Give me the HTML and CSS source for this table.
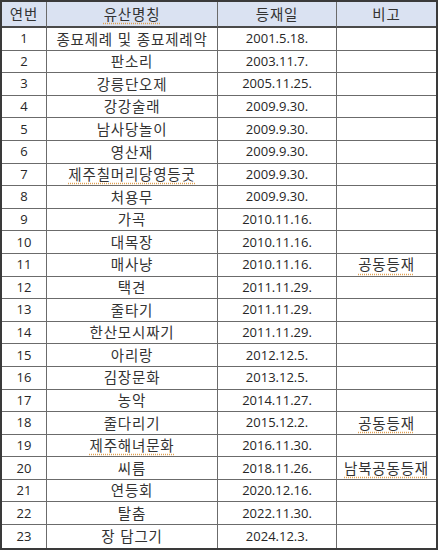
FILE: index.html
```html
<!DOCTYPE html>
<html lang="ko">
<head>
<meta charset="utf-8">
<link rel="stylesheet" href="styles.css">
</head>
<body>
<div class="table">
  <div class="cell head ko">연번</div><div class="cell head ko"><span class="sq">유산명칭</span></div><div class="cell head ko">등재일</div><div class="cell head ko last">비고</div>
  <div class="cell">1</div><div class="cell ko">종묘제례 및 종묘제례악</div><div class="cell">2001.5.18.</div><div class="cell last"></div>
  <div class="cell">2</div><div class="cell ko">판소리</div><div class="cell">2003.11.7.</div><div class="cell last"></div>
  <div class="cell">3</div><div class="cell ko">강릉단오제</div><div class="cell">2005.11.25.</div><div class="cell last"></div>
  <div class="cell">4</div><div class="cell ko">강강술래</div><div class="cell">2009.9.30.</div><div class="cell last"></div>
  <div class="cell">5</div><div class="cell ko">남사당놀이</div><div class="cell">2009.9.30.</div><div class="cell last"></div>
  <div class="cell">6</div><div class="cell ko">영산재</div><div class="cell">2009.9.30.</div><div class="cell last"></div>
  <div class="cell">7</div><div class="cell ko"><span class="sq">제주칠머리당영등굿</span></div><div class="cell">2009.9.30.</div><div class="cell last"></div>
  <div class="cell">8</div><div class="cell ko">처용무</div><div class="cell">2009.9.30.</div><div class="cell last"></div>
  <div class="cell">9</div><div class="cell ko">가곡</div><div class="cell">2010.11.16.</div><div class="cell last"></div>
  <div class="cell">10</div><div class="cell ko">대목장</div><div class="cell">2010.11.16.</div><div class="cell last"></div>
  <div class="cell">11</div><div class="cell ko">매사냥</div><div class="cell">2010.11.16.</div><div class="cell ko last"><span class="sq">공동등재</span></div>
  <div class="cell">12</div><div class="cell ko">택견</div><div class="cell">2011.11.29.</div><div class="cell last"></div>
  <div class="cell">13</div><div class="cell ko">줄타기</div><div class="cell">2011.11.29.</div><div class="cell last"></div>
  <div class="cell">14</div><div class="cell ko">한산모시짜기</div><div class="cell">2011.11.29.</div><div class="cell last"></div>
  <div class="cell">15</div><div class="cell ko">아리랑</div><div class="cell">2012.12.5.</div><div class="cell last"></div>
  <div class="cell">16</div><div class="cell ko">김장문화</div><div class="cell">2013.12.5.</div><div class="cell last"></div>
  <div class="cell">17</div><div class="cell ko">농악</div><div class="cell">2014.11.27.</div><div class="cell last"></div>
  <div class="cell">18</div><div class="cell ko">줄다리기</div><div class="cell">2015.12.2.</div><div class="cell ko last"><span class="sq">공동등재</span></div>
  <div class="cell">19</div><div class="cell ko"><span class="sq">제주해녀문화</span></div><div class="cell">2016.11.30.</div><div class="cell last"></div>
  <div class="cell">20</div><div class="cell ko">씨름</div><div class="cell">2018.11.26.</div><div class="cell ko last"><span class="sq">남북공동등재</span></div>
  <div class="cell">21</div><div class="cell ko">연등회</div><div class="cell">2020.12.16.</div><div class="cell last"></div>
  <div class="cell">22</div><div class="cell ko">탈춤</div><div class="cell">2022.11.30.</div><div class="cell last"></div>
  <div class="cell end">23</div><div class="cell ko end">장 담그기</div><div class="cell end">2024.12.3.</div><div class="cell last end"></div>
</div>
</body>
</html>
```
FILE: styles.css
```css
html, body {
  margin: 0;
  padding: 0;
  background: #ffffff;
}
.table {
  width: 438px;
  box-sizing: border-box;
  border: 2px solid #3a3a3a;
  display: grid;
  grid-template-columns: 45px 171px 119px 1fr;
  grid-template-rows: 26px;
  grid-auto-rows: 22.6px;
  font-family: "Open Sans", "Noto Sans CJK KR", sans-serif;
  font-size: 13px;
  color: #262626;
}
.cell {
  box-sizing: border-box;
  border-right: 1px solid #6b6b6b;
  border-bottom: 1px solid #6b6b6b;
  display: flex;
  align-items: center;
  justify-content: center;
  white-space: nowrap;
  line-height: 1;
}
.ko {
  font-family: "Noto Sans CJK KR", sans-serif;
  font-size: 14.5px;
  letter-spacing: 0.8px;
  color: #333333;
}
.cell.last {
  border-right: none;
}
.cell.end {
  border-bottom: none;
}
.head {
  background: #dae2f2;
  border-bottom: 2px solid #4a4a4a;
}
.sq {
  text-decoration: underline dotted #e0a050;
  text-underline-offset: 3px;
}
```
